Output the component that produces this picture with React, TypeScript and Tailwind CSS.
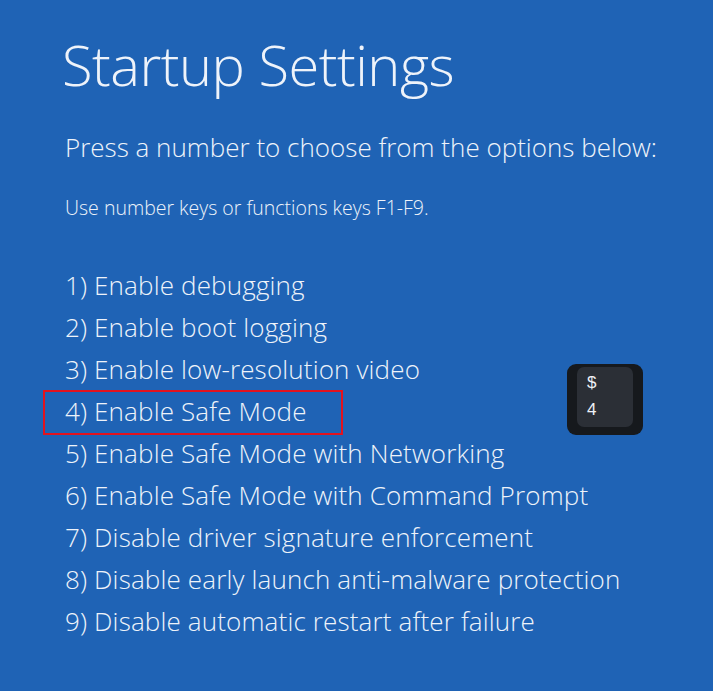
import React from 'react';

const OPTIONS = [
  '1) Enable debugging',
  '2) Enable boot logging',
  '3) Enable low-resolution video',
  '4) Enable Safe Mode',
  '5) Enable Safe Mode with Networking',
  '6) Enable Safe Mode with Command Prompt',
  '7) Disable driver signature enforcement',
  '8) Disable early launch anti-malware protection',
  '9) Disable automatic restart after failure',
];

export default function App() {
  return (
    <div
      className="relative w-[713px] h-[691px] overflow-hidden bg-[#1f63b5] text-[#eef3fa] font-light"
      style={{ fontFamily: '"Open Sans", "Noto Sans", sans-serif' }}
    >
      <div className="pl-[62px] pt-[36px]">
        <h1 className="text-[56px] leading-[56px] font-light tracking-[-0.5px]">Startup Settings</h1>
      </div>

      <div className="pl-[65px] pt-[40px]">
        <p className="text-[26px] leading-[30px]">Press a number to choose from the options below:</p>
        <p className="mt-[34px] text-[19.5px] leading-[24px]">Use number keys or functions keys F1-F9.</p>
      </div>

      <ul className="pl-[65px] pt-[44px]">
        {OPTIONS.map((label, i) => (
          <li key={label} className="relative text-[26px] leading-[42px] tracking-[0.15px]">
            {label}
            {i === 3 && (
              <span className="absolute left-[-22px] top-[0px] w-[300px] h-[45px] border-2 border-[#e3131f]" />
            )}
          </li>
        ))}
      </ul>

      {/* keycap overlay */}
      <div className="absolute left-[567px] top-[364px] w-[76px] h-[71px] rounded-[9px] bg-[#16191d] p-[3px_10px_8px_10px]">
        <div
          className="w-full h-full rounded-[7px] bg-[#2b2f36] pl-[10px] pt-[6px] flex flex-col gap-[7px] text-[17px] leading-[20px] font-normal text-[#eef1f5]"
          style={{ fontFamily: '"Liberation Sans", Arial, sans-serif' }}
        >
          <span>$</span>
          <span>4</span>
        </div>
      </div>
    </div>
  );
}
